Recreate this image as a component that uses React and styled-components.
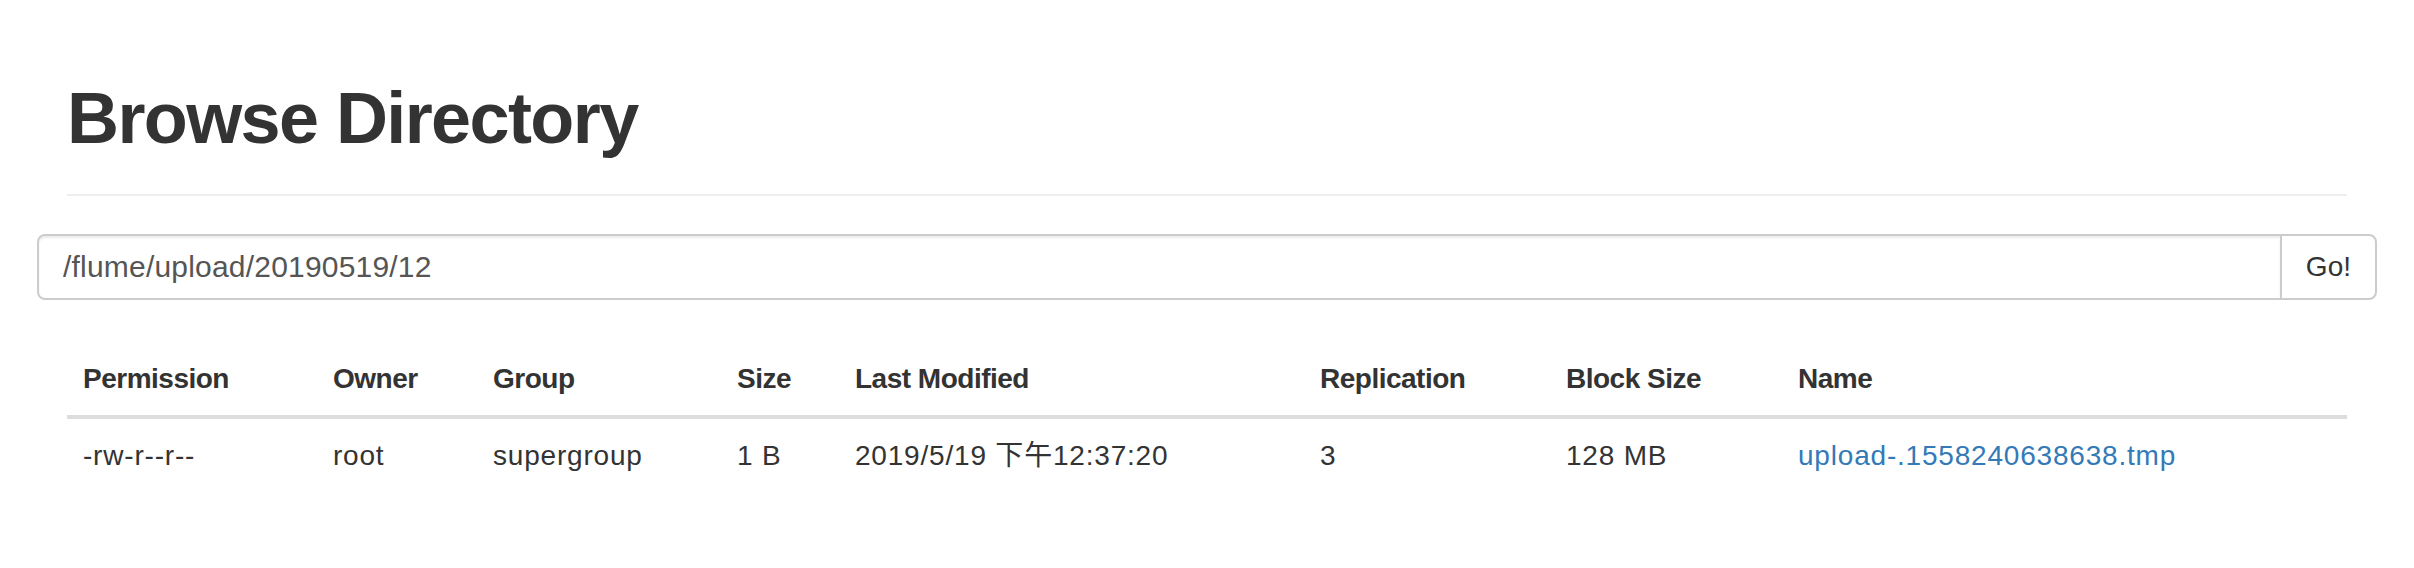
import styled, { createGlobalStyle } from "styled-components";

const GlobalStyle = createGlobalStyle`
  html, body {
    margin: 0;
    background: #fff;
  }
  body {
    font-family: "Liberation Sans", Helvetica, Arial, "Noto Sans CJK SC", sans-serif;
    font-size: 28px;
    line-height: 40px;
    color: #333;
  }
`;

const columns = [
  { key: "permission", label: "Permission", width: 250 },
  { key: "owner", label: "Owner", width: 160 },
  { key: "group", label: "Group", width: 244 },
  { key: "size", label: "Size", width: 118 },
  { key: "modified", label: "Last Modified", width: 465 },
  { key: "replication", label: "Replication", width: 246 },
  { key: "blockSize", label: "Block Size", width: 232 },
  { key: "name", label: "Name", width: 565 },
];

const files = [
  {
    permission: "-rw-r--r--",
    owner: "root",
    group: "supergroup",
    size: "1 B",
    modified: "2019/5/19 下午12:37:20",
    replication: "3",
    blockSize: "128 MB",
    name: "upload-.1558240638638.tmp",
  },
];

const Container = styled.div`
  width: 2340px;
  margin: 0 auto;
  padding: 0 30px;
  box-sizing: border-box;
`;

const PageHeader = styled.div`
  margin-top: 79px;
  margin-bottom: 38px;
  padding-bottom: 16px;
  border-bottom: 2px solid #eee;
`;

const Title = styled.h1`
  margin: 0 0 20px;
  font-size: 72px;
  line-height: 1.1;
  font-weight: 700;
  letter-spacing: -1.6px;
  color: #333;
`;

const SearchRow = styled.div`
  display: flex;
  height: 66px;
  margin: 0 -30px;
`;

const PathInput = styled.input`
  flex: 1;
  min-width: 0;
  height: 100%;
  box-sizing: border-box;
  padding: 0 24px;
  border: 2px solid #ccc;
  border-radius: 8px 0 0 8px;
  box-shadow: inset 0 2px 2px rgba(0, 0, 0, 0.075);
  font-family: "Liberation Sans", Helvetica, Arial, sans-serif;
  font-size: 30px;
  letter-spacing: 0.2px;
  color: #555;
  background: #fff;
  outline: none;
`;

const GoButton = styled.button`
  height: 100%;
  box-sizing: border-box;
  margin-left: -2px;
  padding: 0 24px;
  border: 2px solid #ccc;
  border-radius: 0 8px 8px 0;
  background: #fff;
  font-family: "Liberation Sans", Helvetica, Arial, sans-serif;
  font-size: 28px;
  color: #333;
  cursor: pointer;
`;

const Table = styled.table`
  width: 100%;
  margin-top: 43px;
  border-collapse: collapse;
  table-layout: fixed;
`;

const Col = styled.col`
  width: ${({ $width }) => $width}px;
`;

const HeadCell = styled.th`
  padding: 16px;
  text-align: left;
  font-weight: 700;
  letter-spacing: -0.5px;
  border-bottom: 4px solid #ddd;
  white-space: nowrap;
`;

const Cell = styled.td`
  padding: 17px 16px 15px;
  text-align: left;
  letter-spacing: 0.8px;
  white-space: nowrap;
  vertical-align: top;
`;

const FileLink = styled.a`
  color: #337ab7;
  text-decoration: none;
`;

export default function App() {
  return (
    <>
      <GlobalStyle />
      <Container>
        <PageHeader>
          <Title>Browse Directory</Title>
        </PageHeader>
        <SearchRow>
          <PathInput type="text" defaultValue="/flume/upload/20190519/12" />
          <GoButton type="button">Go!</GoButton>
        </SearchRow>
        <Table>
          <colgroup>
            {columns.map((c) => (
              <Col key={c.key} $width={c.width} />
            ))}
          </colgroup>
          <thead>
            <tr>
              {columns.map((c) => (
                <HeadCell key={c.key}>{c.label}</HeadCell>
              ))}
            </tr>
          </thead>
          <tbody>
            {files.map((f) => (
              <tr key={f.name}>
                {columns.map((c) => (
                  <Cell key={c.key}>
                    {c.key === "name" ? (
                      <FileLink href="#">{f.name}</FileLink>
                    ) : (
                      f[c.key]
                    )}
                  </Cell>
                ))}
              </tr>
            ))}
          </tbody>
        </Table>
      </Container>
    </>
  );
}
